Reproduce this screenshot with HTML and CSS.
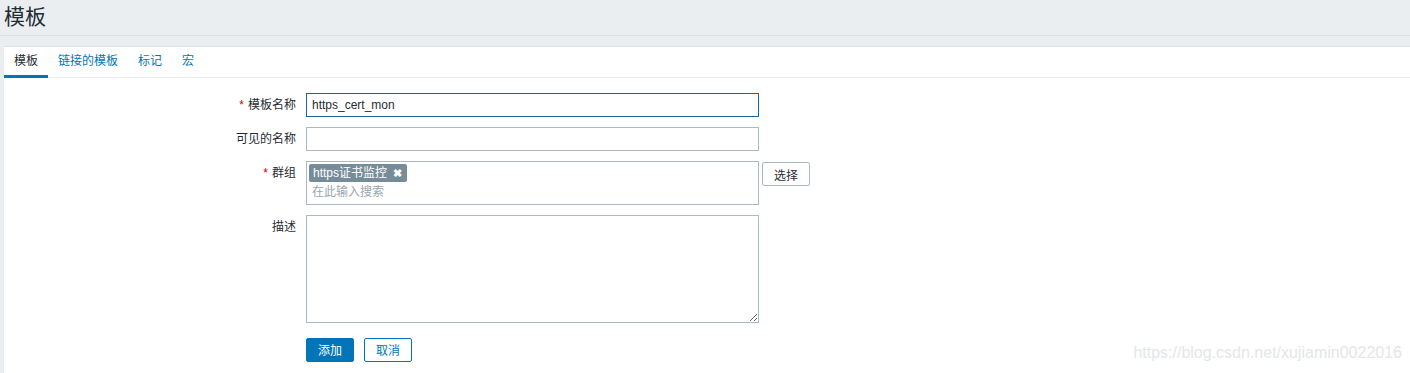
FILE: index.html
```html
<!DOCTYPE html>
<html lang="zh-CN">
<head>
  <meta charset="UTF-8" />
  <title>模板</title>
  <link rel="stylesheet" href="styles.css">
</head>
<body>

  <header class="page-header">
    <h1>模板</h1>
  </header>

  <main class="panel">
    <ul class="tabs">
      <li class="tab active">模板</li>
      <li class="tab">链接的模板</li>
      <li class="tab">标记</li>
      <li class="tab">宏</li>
    </ul>

    <form class="form-list">
      <label class="form-label required">模板名称</label>
      <div class="form-field">
        <input type="text" class="text-input focused" value="https_cert_mon" />
      </div>

      <label class="form-label">可见的名称</label>
      <div class="form-field">
        <input type="text" class="text-input" />
      </div>

      <label class="form-label required">群组</label>
      <div class="form-field">
        <div class="multiselect">
          <span class="tag">https证书监控 <span class="tag-remove">&#10006;</span></span>
          <span class="ms-placeholder">在此输入搜索</span>
        </div>
        <button type="button" class="btn-alt">选择</button>
      </div>

      <label class="form-label">描述</label>
      <div class="form-field">
        <textarea class="text-area"></textarea>
      </div>

      <div></div>
      <div class="form-actions">
        <button type="button" class="btn-primary">添加</button>
        <button type="button" class="btn-secondary">取消</button>
      </div>
    </form>
  </main>

  <div class="watermark">https://blog.csdn.net/xujiamin0022016</div>

</body>
</html>
```

FILE: styles.css
```css
body {
  margin: 0;
  background: #ebeef0;
  color: #1f2c33;
  font-family: "Liberation Sans", "Noto Sans CJK SC", sans-serif;
  font-size: 12px;
  height: 373px;
  overflow: hidden;
}

.page-header {
  height: 35px;
  border-bottom: 1px solid #dde2e5;
  padding-left: 4px;
}

.page-header h1 {
  margin: 0;
  padding-top: 5px;
  font-size: 21px;
  font-weight: normal;
  line-height: 24px;
}

.panel {
  margin: 10px 0 0 4px;
  background: #fff;
  border-top: 1px solid #dde2e5;
  height: 330px;
}

.tabs {
  list-style: none;
  margin: 0;
  padding: 0;
  display: flex;
  height: 30px;
  border-bottom: 1px solid #ebeef0;
}

.tab {
  padding: 7px 10px 0;
  line-height: 14px;
  color: #0275b8;
}

.tab.active {
  color: #1f2c33;
  border-bottom: 3px solid #0275b8;
  margin-bottom: -1px;
}

.form-list {
  display: grid;
  grid-template-columns: 292px 1fr;
  column-gap: 10px;
  row-gap: 10px;
  padding-top: 15px;
}

.form-label {
  text-align: right;
  padding-top: 5px;
  line-height: 14px;
}

.form-label.required::before {
  content: "*";
  color: #d40000;
  margin-right: 4px;
}

.form-field {
  display: flex;
  align-items: flex-start;
  gap: 3px;
}

.text-input {
  box-sizing: border-box;
  width: 453px;
  height: 24px;
  margin: 0;
  padding: 0 5px;
  border: 1px solid #acbbc2;
  font: inherit;
  color: #1f2c33;
  outline: none;
}

.text-input.focused {
  border-color: #1a65a0;
}

.multiselect {
  box-sizing: border-box;
  width: 453px;
  height: 44px;
  border: 1px solid #acbbc2;
  padding: 2px 2px 0;
  display: flex;
  flex-direction: column;
  align-items: flex-start;
  gap: 3px;
}

.tag {
  background: #768d99;
  color: #fff;
  line-height: 18px;
  padding: 0 5px 0 4px;
  border-radius: 2px;
}

.tag-remove {
  font-size: 11px;
  font-weight: bold;
  margin-left: 3px;
}

.ms-placeholder {
  color: #9aa6ad;
  padding-left: 3px;
  line-height: 14px;
}

.btn-alt {
  height: 24px;
  width: 48px;
  margin-top: 1px;
  background: #fff;
  border: 1px solid #acbbc2;
  border-radius: 2px;
  color: #1f2c33;
  font: inherit;
}

.text-area {
  box-sizing: border-box;
  width: 453px;
  height: 108px;
  margin: 0;
  border: 1px solid #acbbc2;
  font: inherit;
  display: block;
}

.form-actions {
  display: flex;
  gap: 10px;
  padding-top: 5px;
}

.btn-primary,
.btn-secondary {
  height: 24px;
  width: 48px;
  border-radius: 2px;
  font: inherit;
  padding: 0 0 2px;
}

.btn-primary {
  background: #0275b8;
  border: 1px solid #0275b8;
  color: #fff;
}

.btn-secondary {
  background: #fff;
  border: 1px solid #0275b8;
  color: #0275b8;
}

.watermark {
  position: absolute;
  right: 8px;
  top: 344px;
  font-size: 16px;
  letter-spacing: 0;
  color: #e4e6e8;
}
```
